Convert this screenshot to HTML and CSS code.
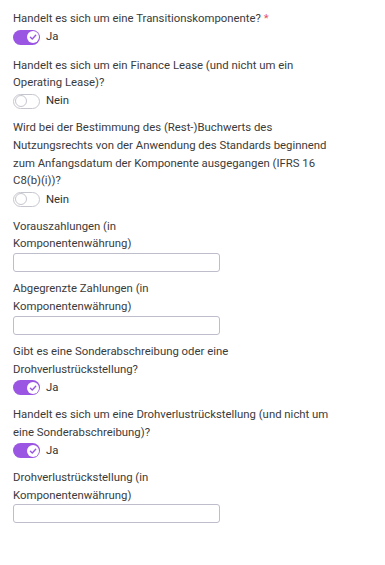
FILE: index.html
```html
<!DOCTYPE html>
<html lang="de">
<head>
<meta charset="utf-8">
<link rel="stylesheet" href="styles.css">
</head>
<body>
<form class="form">
  <div class="field">
    <div class="label">Handelt es sich um eine Transitionskomponente? <span class="req">*</span></div>
    <label class="toggle-row"><span class="toggle on"><span class="knob"><svg viewBox="0 0 12 12" width="12" height="12"><path d="M3.4 6.2 L5.3 8 L8.7 4.3" fill="none" stroke="#9a55e3" stroke-width="1.4" stroke-linecap="round" stroke-linejoin="round"/></svg></span></span><span class="tlabel">Ja</span></label>
  </div>
  <div class="field">
    <div class="label">Handelt es sich um ein Finance Lease (und nicht um ein Operating Lease)?</div>
    <label class="toggle-row"><span class="toggle off"><span class="knob"></span></span><span class="tlabel">Nein</span></label>
  </div>
  <div class="field">
    <div class="label">Wird bei der Bestimmung des (Rest-)Buchwerts des Nutzungsrechts von der Anwendung des Standards beginnend zum Anfangsdatum der Komponente ausgegangen (IFRS 16 C8(b)(i))?</div>
    <label class="toggle-row"><span class="toggle off"><span class="knob"></span></span><span class="tlabel">Nein</span></label>
  </div>
  <div class="field narrow">
    <div class="label">Vorauszahlungen (in Komponentenwährung)</div>
    <input class="input" type="text">
  </div>
  <div class="field narrow">
    <div class="label">Abgegrenzte Zahlungen (in Komponentenwährung)</div>
    <input class="input" type="text">
  </div>
  <div class="field">
    <div class="label">Gibt es eine Sonderabschreibung oder eine Drohverlustrückstellung?</div>
    <label class="toggle-row"><span class="toggle on"><span class="knob"><svg viewBox="0 0 12 12" width="12" height="12"><path d="M3.4 6.2 L5.3 8 L8.7 4.3" fill="none" stroke="#9a55e3" stroke-width="1.4" stroke-linecap="round" stroke-linejoin="round"/></svg></span></span><span class="tlabel">Ja</span></label>
  </div>
  <div class="field">
    <div class="label">Handelt es sich um eine Drohverlustrückstellung (und nicht um eine Sonderabschreibung)?</div>
    <label class="toggle-row"><span class="toggle on"><span class="knob"><svg viewBox="0 0 12 12" width="12" height="12"><path d="M3.4 6.2 L5.3 8 L8.7 4.3" fill="none" stroke="#9a55e3" stroke-width="1.4" stroke-linecap="round" stroke-linejoin="round"/></svg></span></span><span class="tlabel">Ja</span></label>
  </div>
  <div class="field narrow">
    <div class="label">Drohverlustrückstellung (in Komponentenwährung)</div>
    <input class="input" type="text">
  </div>
</form>
</body>
</html>
```
FILE: styles.css
```css
html, body {
  margin: 0;
  padding: 0;
  background: #ffffff;
}
body {
  font-family: Roboto, "Liberation Sans", Arial, sans-serif;
  font-size: 11.35px;
  line-height: 17.6px;
  color: #3b3b3b;
}
.form {
  padding: 10px 13px 0 13px;
  width: 325px;
  display: flex;
  flex-direction: column;
}
.field {
  display: flex;
  flex-direction: column;
  margin-bottom: 8.7px;
}
.field:first-child {
  margin-bottom: 10px;
}
.field.narrow {
  width: 207px;
}
.req {
  color: #e0566a;
}
.toggle-row {
  display: flex;
  align-items: center;
  height: 19px;
}
.toggle {
  box-sizing: border-box;
  width: 27px;
  height: 15px;
  border-radius: 8px;
  display: flex;
  align-items: center;
  padding: 0 1.5px;
}
.toggle.on {
  background: #9a55e3;
  justify-content: flex-end;
}
.toggle.off {
  background: #ffffff;
  border: 1px solid #c6c6cf;
  justify-content: flex-start;
  padding: 0 0.5px;
}
.knob {
  width: 12px;
  height: 12px;
  border-radius: 50%;
  background: #ffffff;
  display: flex;
  align-items: center;
  justify-content: center;
  box-sizing: border-box;
}
.toggle.off .knob {
  border: 1px solid #c6c6cf;
}
.knob svg {
  display: block;
}
.tlabel {
  margin-left: 6px;
  color: #333333;
}
.input {
  box-sizing: border-box;
  width: 207px;
  height: 19px;
  margin: 0;
  border: 1px solid #bdbdcc;
  border-radius: 3px;
  background: #ffffff;
  font: inherit;
  padding: 0 4px;
}
```
